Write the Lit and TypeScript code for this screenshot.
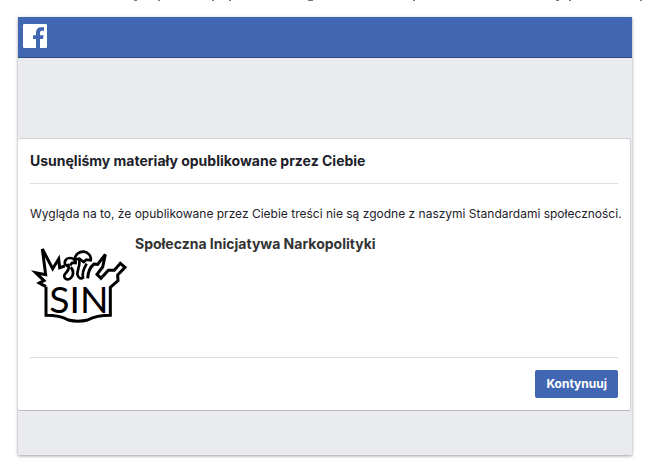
import { LitElement, html, css, svg } from "lit";
import { customElement } from "lit/decorators.js";

/** Tails of the text line that is scrolled out above the window: [x, width]. */
const TAILS: Array<[number, number]> = [
  [134, 3], [158, 2], [212, 2], [229, 2], [308, 5], [413, 2], [556, 3], [569, 2], [640, 2],
];

@customElement("fb-mark")
class FbMark extends LitElement {
  static styles = css`
    :host { display: block; line-height: 0; }
    svg { width: 24px; height: 24px; }
  `;
  render() {
    return html`<svg viewBox="0 0 72 72" role="img" aria-label="Facebook">
      <rect width="72" height="72" rx="4" fill="#fff" />
      <path fill="#4267b2" d="M39 72V45H30V34H39V27C39 16 45 10 55 10H63V20H57C52 20 51 23 51 27V34H62L60 45H51V72Z" />
    </svg>`;
  }
}

@customElement("sin-logo")
class SinLogo extends LitElement {
  static styles = css`
    :host { display: block; line-height: 0; }
    svg { width: 100px; height: 80px; }
    text { font: 112px Lato, sans-serif; }
  `;
  render() {
    return html`<svg viewBox="15 33 300 240" role="img" aria-label="SIN">
      <g fill="none" stroke="#000" stroke-width="9" stroke-miterlimit="4">
        <path d="M63 155V241C92 241 112 245 130 255Q159 262 188 255C207 245 228 241 256 241V157L279 137L278 120L300 97L286 85L268 106L250 106L228 130L216 118L233 96L241 58L218 88L207 87C196 96 189 110 188 130" />
        <path d="M63 155L43 144L57 137L32 113L62 119L52 42L83 101L101 72L104 98L119 93" />
        <path stroke-width="8" d="M121 92C116 78 124 69 134 69C146 69 154 77 152 84L142 83L135 91" />
        <path stroke-width="8" d="M121 92L130 90C135 103 126 110 118 120C116 131 126 136 135 131C147 122 147 106 137 97" />
        <path stroke-width="8" d="M149 74C150 58 163 49 177 50C190 52 200 64 197 76L184 74L176 81L163 71Z" />
        <path stroke-width="8" d="M163 74C166 92 157 104 157 118C159 129 168 133 174 128C170 110 178 98 185 86" />
      </g>
      <text x="73" y="233">SIN</text>
    </svg>`;
  }
}

@customElement("app-root")
class AppRoot extends LitElement {
  static styles = css`
    :host {
      display: block;
      background: #fff;
      color: #1d2129;
      font: 12px/16px Inter, "Liberation Sans", sans-serif;
    }
    .tails { display: block; width: 100%; height: 1px; }
    .window {
      margin: 16px 17px 16px 18px;
      background: #e9ebee;
      box-shadow: 0 1px 3px rgba(0, 0, 0, 0.4);
    }
    .bar {
      display: flex;
      padding: 7px 5px 9px;
      background: #4267b2;
      border-bottom: 1px solid #29487d;
    }
    main { padding: 80px 1px 44px 0; }
    .card {
      padding: 0 12px 12px;
      background: #fff;
      border: 1px solid #d0d2d8;
      border-left-width: 0;
      border-bottom-color: #b8babf;
      border-radius: 3px;
    }
    h1, h2, p { margin: 0; }
    h1, h2 { font-size: 14px; line-height: 20px; font-weight: 700; }
    h1 { padding: 12px 0; border-bottom: 1px solid #dadde1; }
    p { padding-top: 22px; white-space: nowrap; }
    .page { display: flex; gap: 5px; padding: 12px 0 31px; }
    h2 { color: #333; }
    .logo { padding-top: 12px; }
    footer {
      display: flex;
      justify-content: flex-end;
      padding-top: 12px;
      border-top: 1px solid #dadde1;
    }
    button {
      height: 28px;
      padding: 0 11px;
      border: 0;
      border-radius: 2px;
      background: #4267b2;
      color: #fff;
      font: 700 12px/16px Inter, "Liberation Sans", sans-serif;
    }
  `;
  render() {
    return html`
      <svg class="tails" aria-hidden="true">
        ${TAILS.map(([x, w]) => svg`<rect x=${x} y="0" width=${w} height="1" fill="#777" />`)}
      </svg>
      <div class="window">
        <header class="bar"><fb-mark></fb-mark></header>
        <main>
          <section class="card">
            <h1>Usunęliśmy materiały opublikowane przez Ciebie</h1>
            <p>Wygląda na to, że opublikowane przez Ciebie treści nie są zgodne z naszymi Standardami społeczności.</p>
            <div class="page">
              <sin-logo class="logo"></sin-logo>
              <h2>Społeczna Inicjatywa Narkopolityki</h2>
            </div>
            <footer><button type="button">Kontynuuj</button></footer>
          </section>
        </main>
      </div>
    `;
  }
}
